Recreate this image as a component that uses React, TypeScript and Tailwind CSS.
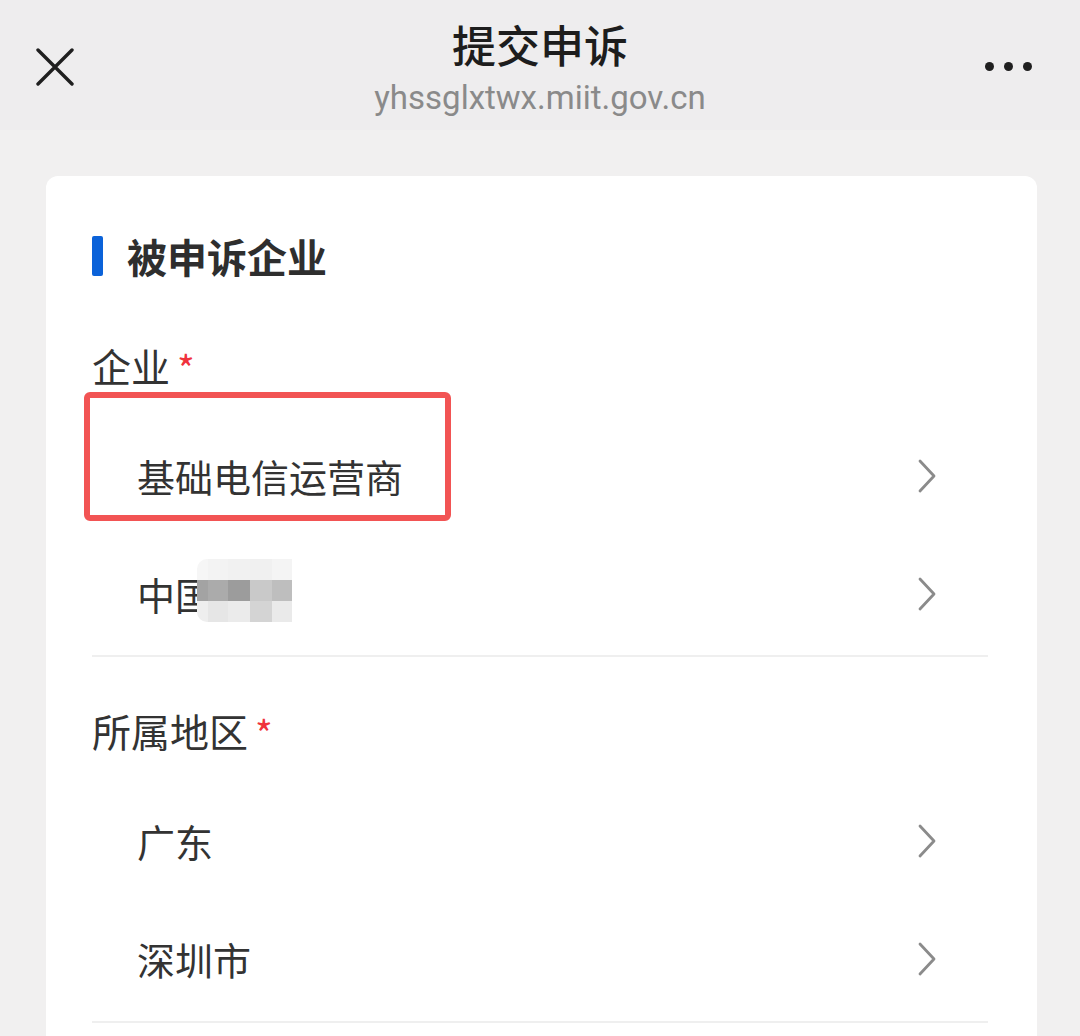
const FONT = "font-['Noto_Sans_CJK_SC','Noto_Sans',sans-serif]";

const Chevron = () => (
  <svg width="20" height="34" viewBox="0 0 20 34" fill="none" className="shrink-0">
    <polyline
      points="3,2 17,17 3,32"
      stroke="#8b8b8b"
      strokeWidth="2.8"
      strokeLinecap="round"
      strokeLinejoin="round"
    />
  </svg>
);

const Row = ({ children }: { children: React.ReactNode }) => (
  <div className="flex h-[118px] items-center justify-between pl-[45px] pr-[51px]">
    <div className="text-[38px] leading-[40px] text-[#333333]">{children}</div>
    <Chevron />
  </div>
);

const Label = ({ text }: { text: string }) => (
  <div className="flex h-[40px] items-start text-[39px] leading-[40px] text-[#333333]">
    <span>{text}</span>
    <span className="relative top-[3px] ml-[7px] text-[38px] leading-[40px] text-[#f0323c]">*</span>
  </div>
);

// mosaic blur over the redacted carrier name
const MOSAIC = [
  ["#f6f6f6", "#f3f3f3", "#f1f1f1", "#f0f0f0", "#f4f4f4"],
  ["#a3a3a3", "#ababab", "#9c9c9c", "#c9c9c9", "#bebebe"],
  ["#eeeeee", "#e6e6e6", "#ebebeb", "#d4d4d4", "#eaeaea"],
];
const COLS = ["w-[11px]", "w-[20px]", "w-[22px]", "w-[22px]", "w-[20px]"];

const Redacted = () => (
  <span className="relative inline-block">
    中国
    <span className="absolute left-[60px] top-[-15px] flex flex-col overflow-hidden rounded-l-[10px]">
      {MOSAIC.map((row, r) => (
        <span key={r} className="flex h-[21px]">
          {row.map((c, i) => (
            <span key={i} className={`${COLS[i]} h-full`} style={{ backgroundColor: c }} />
          ))}
        </span>
      ))}
    </span>
  </span>
);

export default function App() {
  return (
    <div className={`${FONT} h-[1036px] w-[1080px] overflow-hidden bg-[#f1f0f0]`}>
      {/* top bar */}
      <div className="relative flex h-[130px] flex-col items-center bg-[#eeedee] pt-[16px]">
        <button className="absolute left-[36px] top-[48px]">
          <svg width="38" height="38" viewBox="0 0 38 38" fill="none">
            <path d="M2 2 L36 36 M36 2 L2 36" stroke="#1f1f1f" strokeWidth="3.4" strokeLinecap="round" />
          </svg>
        </button>
        <div className="text-[44px] font-medium leading-[56px] text-[#1d1d1d]">提交申诉</div>
        <div className="mt-[5px] font-['Roboto',sans-serif] text-[33px] leading-[42px] text-[#8a8a8a]">
          yhssglxtwx.miit.gov.cn
        </div>
        <div className="absolute right-[48px] top-[62px] flex gap-[10px]">
          <span className="h-[9px] w-[9px] rounded-full bg-[#1f1f1f]" />
          <span className="h-[9px] w-[9px] rounded-full bg-[#1f1f1f]" />
          <span className="h-[9px] w-[9px] rounded-full bg-[#1f1f1f]" />
        </div>
      </div>

      {/* card */}
      <div className="ml-[46px] mr-[43px] mt-[46px] rounded-[12px] bg-white pl-[46px] pr-[49px] pt-[60px]">
        <div className="flex h-[40px] items-center">
          <span className="h-[40px] w-[11px] rounded-[2px] bg-[#0b62d9]" />
          <span className="ml-[24px] text-[40px] font-bold leading-[40px] text-[#2e2e2e]">被申诉企业</span>
        </div>

        <div className="mt-[69px]">
          <Label text="企业" />
        </div>
        <div className="relative mt-[32px]">
          <div className="pointer-events-none absolute left-[-8px] top-[-25px] h-[129px] w-[367px] rounded-[6px] border-[6px] border-[#f25454]" />
          <Row>基础电信运营商</Row>
          <Row>
            <Redacted />
          </Row>
        </div>
        <div className="mt-[2px] h-[2px] bg-[#efefef]" />

        <div className="mt-[53px]">
          <Label text="所属地区" />
        </div>
        <div className="mt-[32px]">
          <Row>广东</Row>
          <Row>深圳市</Row>
        </div>
        <div className="mt-[3px] h-[2px] bg-[#efefef]" />
        <div className="h-[40px]" />
      </div>
    </div>
  );
}
